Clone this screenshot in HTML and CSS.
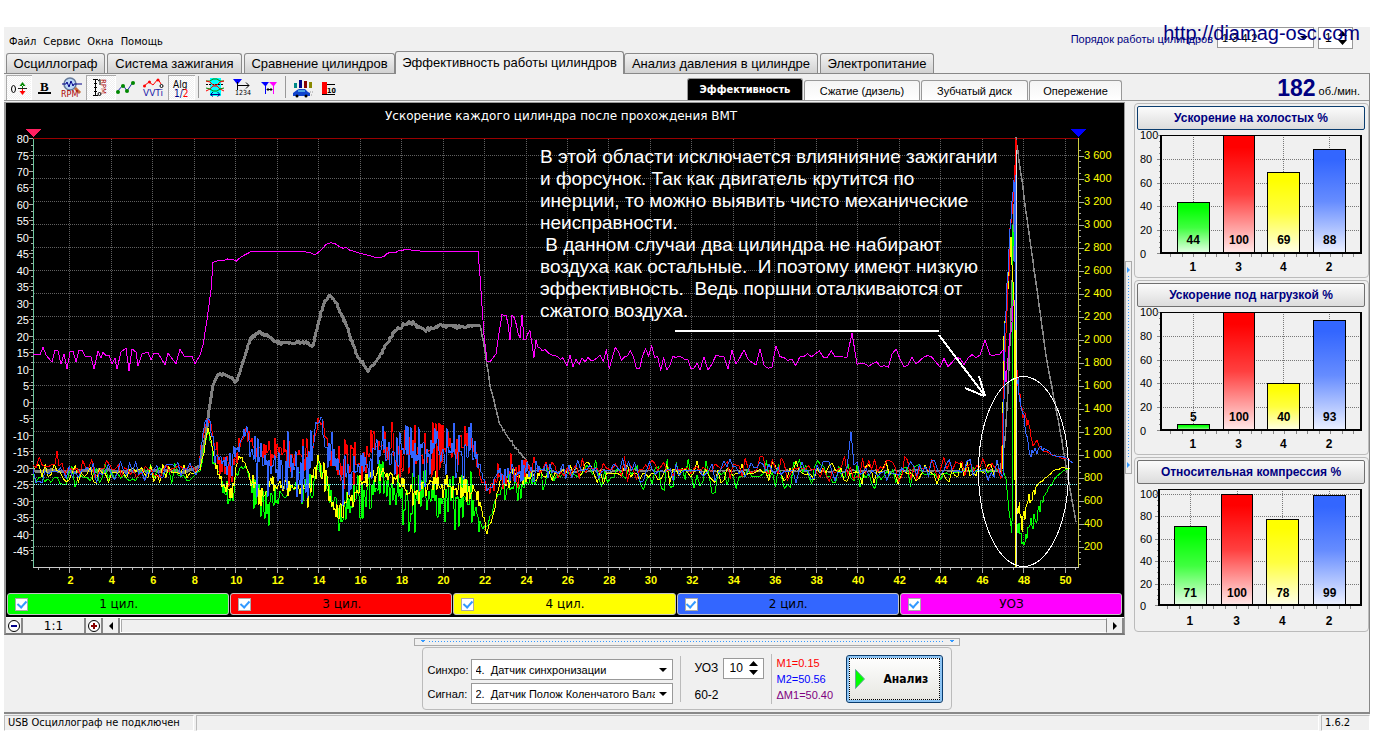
FILE: index.html
```html
<!DOCTYPE html>
<html lang="ru">
<head>
<meta charset="utf-8">
<title>Осциллограф</title>
<link rel="stylesheet" href="styles.css">
</head>
<body>
<div class="app">
  <header class="menubar">
    <nav class="menu">
      <button type="button">Файл</button><button type="button">Сервис</button><button type="button">Окна</button><button type="button">Помощь</button>
    </nav>
    <div class="order">
      <label for="order">Порядок работы цилиндров</label>
      <span class="combo order-combo"><select id="order"><option>1-3-4-2</option></select></span>
      <span class="spin order-spin"><input type="text" value="1" aria-label="Первый цилиндр"><svg viewBox="0 0 9 14"><path d="M4.500 0L9 5H0zM0 9h9L4.500 14z"/></svg></span>
    </div>
    <a class="site" href="#">http://diamag-osc.com</a>
  </header>

  <nav class="tabs">
    <button type="button" class="t1">Осциллограф</button>
    <button type="button" class="t2">Система зажигания</button>
    <button type="button" class="t3">Сравнение цилиндров</button>
    <button type="button" class="t4 active">Эффективность работы цилиндров</button>
    <button type="button" class="t5">Анализ давления в цилиндре</button>
    <button type="button" class="t6">Электропитание</button>
  </nav>

  <main class="frame">
    <div class="toolbar">
      <div class="tools">
        <button type="button" class="pressed" aria-label="Ноль"><svg viewBox="6 75 26 25"><ellipse cx="13.500" cy="89" rx="2" ry="3.500" fill="none" stroke="#000"/><path d="M18 88.500h9" stroke="#222"/><path d="M22.500 82l-3 4h6zM22 85h1v3h-1z" fill="#080"/><path d="M22.500 95l-3-4h6zM22 89h1v3h-1z" fill="red"/></svg></button>
        <button type="button" aria-label="Жирные линии"><svg viewBox="32 75 26 25"><text x="40" y="91" class="ic-b">B</text><path d="M38 93h13" stroke="#000" stroke-width="2"/></svg></button>
        <button type="button" aria-label="Обороты"><svg viewBox="58 75 28 25"><circle cx="70" cy="84" r="6" fill="#bcd8f8" stroke="#667a99" stroke-width="1.500"/><path d="M75 88l5 5" stroke="#c86c3c" stroke-width="3"/><path d="M62 84h4l1-2 2 5 2-6 2 5 1-2h8" fill="none" stroke="#008"/><text x="61" y="97" class="ic-r">RPM</text></svg></button>
        <button type="button" class="pressed" aria-label="Шкала оборотов"><svg viewBox="86 75 30 25"><path d="M93 79.500h5M95.500 79v17M93 95.500h5M94 83.500h3M94 87.500h3M94 91.500h3" stroke="#000"/><path d="M98 81l2-1.500V85" fill="none" stroke="#000"/><circle cx="99.500" cy="94" r="1.500" fill="none" stroke="#000"/><text transform="translate(101 79) rotate(90)" class="ic-s">RPM</text></svg></button>
        <button type="button" aria-label="Точки"><svg viewBox="116 75 26 25"><path d="M117 92l6-7 4 6 6-9" fill="none" stroke="#22a"/><g fill="#080"><circle cx="118" cy="92" r="2"/><circle cx="123" cy="86" r="2"/><circle cx="127" cy="91" r="2"/><circle cx="133" cy="83" r="2"/></g></svg></button>
        <button type="button" aria-label="VVTi"><svg viewBox="142 75 26 25"><path d="M144 86l5-4 4 3 5-6 3 5" fill="none" stroke="red"/><g fill="red"><circle cx="144.500" cy="86" r="1.500"/><circle cx="149.500" cy="82" r="1.500"/><circle cx="158" cy="80" r="1.500"/></g><circle cx="161.500" cy="86" r="1.500" fill="#fff" stroke="#000"/><text x="143" y="96" class="ic-v">VVTi</text></svg></button>
        <button type="button" class="pressed" aria-label="Алгоритм"><svg viewBox="168 75 27 25"><text x="173" y="88" class="ic-a">Alg</text><text x="174" y="97" class="ic-a"><tspan fill="#008">1/</tspan><tspan fill="red">2</tspan></text></svg></button>
        <i class="sep"></i>
        <button type="button" aria-label="Окно фазы"><svg viewBox="202 75 27 25"><path d="M210 78h11v18h-11z" fill="#0ff"/><path d="M206 81h4l3-2h4l3 2h4" fill="none" stroke="#080"/><path d="M206 84.500h18" stroke="#000" stroke-dasharray="2 1"/><path d="M206 81l4 1 3 3h4l3-3 4-1" fill="none" stroke="red"/><path d="M206 91l4-2 3-3h4l3 3 4 2" fill="none" stroke="red"/><path d="M206 88l4 1 3 2h4l3-2 4-1" fill="none" stroke="#080"/><path d="M211 94.500h9M213 92l-2.500 2.500 2.500 2M217.500 92l2.500 2.500-2.500 2" fill="none" stroke="#008"/></svg></button>
        <button type="button" aria-label="Метка 1234"><svg viewBox="229 75 27 25"><path d="M233 79h9l-4 5v3h-1v-3z" fill="#00f"/><path d="M238 85.500h11M246 82.500l3 3-3 3M237.500 82v8" fill="none" stroke="#000"/><text x="235" y="95" class="ic-n">1234</text></svg></button>
        <button type="button" aria-label="Между метками"><svg viewBox="256 75 26 25"><path d="M261 82h8l-3 4v8h-1v-8z" fill="#00f"/><path d="M269 82h8l-3 4v8h-1v-8z" fill="#f0f"/><path d="M267 89.500h5M268.500 88l-1.500 1.500 1.500 1.500M270.500 88l1.500 1.500-1.500 1.500" fill="none" stroke="#000"/></svg></button>
        <i class="sep"></i>
        <button type="button" aria-label="Отчёт"><svg viewBox="290 75 26 25"><path d="M295 83h3v5h-3z" fill="#088"/><path d="M300 80h3v8h-3z" fill="#008"/><path d="M305 81h3v7h-3z" fill="#800"/><path d="M310 82h3v6h-3z" fill="#880"/><path d="M294 93l4-3 2-1h6l3 3 2 1v3h-17z" fill="#14c"/><path d="M299 91h7" stroke="#8ff"/><circle cx="298" cy="96" r="1.500"/><circle cx="307" cy="96" r="1.500"/><path d="M311 92h3M312 95h2" stroke="#999" stroke-dasharray="1 1"/></svg></button>
        <button type="button" aria-label="Порог"><svg viewBox="317 75 26 25"><path d="M324 82h5v12h-5z" fill="red"/><path d="M329 84.500h8M324 94.500h13" stroke="#000"/><text x="329" y="93" class="ic-ten">10</text></svg></button>
      </div>
      <div class="subtabs">
        <button type="button" class="s1 active">Эффективность</button>
        <button type="button" class="s2">Сжатие (дизель)</button>
        <button type="button" class="s3">Зубчатый диск</button>
        <button type="button" class="s4">Опережение</button>
      </div>
      <div class="rpm"><b>182</b> об./мин.</div>
    </div>

    <div class="work">
      <section class="scope">
        <svg id="plot" class="plot" viewBox="6 103 1118 489" role="img" aria-label="Ускорение каждого цилиндра"></svg>
        <div class="legend">
          <label class="c1"><input type="checkbox" checked><span>1 цил.</span></label>
          <label class="c2"><input type="checkbox" checked><span>3 цил.</span></label>
          <label class="c3"><input type="checkbox" checked><span>4 цил.</span></label>
          <label class="c4"><input type="checkbox" checked><span>2 цил.</span></label>
          <label class="c5"><input type="checkbox" checked><span>УОЗ</span></label>
        </div>
        <div class="scroll">
          <button type="button" aria-label="Уменьшить"><svg viewBox="0 0 14 14"><circle cx="7" cy="7" r="5.500" fill="#fff" stroke="#000"/><path d="M4 7h6" stroke="#008" stroke-width="2"/></svg></button>
          <output class="scale">1:1</output>
          <button type="button" aria-label="Увеличить"><svg viewBox="0 0 14 14"><circle cx="7" cy="7" r="5.500" fill="#fff" stroke="#000"/><path d="M4 7h6M7 4v6" stroke="#800" stroke-width="2"/></svg></button>
          <button type="button" class="arrow" aria-label="Влево"><svg viewBox="0 0 14 14"><path d="M9 3v8L5 7z"/></svg></button>
          <div class="track"></div>
          <button type="button" class="arrow" aria-label="Вправо"><svg viewBox="0 0 14 14"><path d="M5 3v8l4-4z"/></svg></button>
        </div>
      </section>
      <div class="vsplit"><div class="vgrip"><i></i><i></i></div></div>
      <aside class="cards">
        <section class="card first"><button type="button">Ускорение на холостых %</button><svg class="bars" id="bars1" viewBox="1137 130 229 143"></svg></section>
        <section class="card"><button type="button">Ускорение под нагрузкой %</button><svg class="bars" id="bars2" viewBox="1137 130 229 143"></svg></section>
        <section class="card"><button type="button">Относительная компрессия %</button><svg class="bars" id="bars3" viewBox="1137 130 229 143"></svg></section>
      </aside>
    </div>

    <div class="bottom">
      <div class="hgrip"></div>
      <div class="panel">
        <div class="sources">
          <label for="sync">Синхро:</label><span class="combo"><select id="sync"><option>4.&nbsp; Датчик синхронизации</option></select></span>
          <label for="signal">Сигнал:</label><span class="combo"><select id="signal"><option>2.&nbsp; Датчик Полож Коленчатого Вала</option></select></span>
        </div>
        <div class="angle">
          <label for="uoz">УОЗ</label>
          <span class="spin"><input id="uoz" type="text" value="10"><svg viewBox="0 0 9 14"><path d="M4.500 0L9 5H0zM0 9h9L4.500 14z"/></svg></span>
          <span>60-2</span>
        </div>
        <div class="marks"><span class="m1">M1=0.15</span><span class="m2">M2=50.56</span><span class="m3">ΔM1=50.40</span></div>
        <button type="button" class="analyze"><svg viewBox="0 0 10 20"><path d="M0.500 0.500L9.500 10 0.500 19.500z" fill="#0f0" stroke="#6a9"/></svg><span>Анализ</span></button>
      </div>
    </div>
  </main>

  <footer class="status"><span class="st1">USB Осциллограф не подключен</span><span class="st2"></span><span class="st3">1.6.2</span></footer>
</div>
<script src="chart.js"></script>
</body>
</html>
```
FILE: styles.css
```css
* { box-sizing: border-box; }
body {
  margin: 0;
  padding: 27px 4px 5px;
  background: #fff;
  color: #000;
  font: 11px/14px "Liberation Sans", Arial, sans-serif;
}
button, select, input { font: inherit; color: inherit; margin: 0; }
svg { display: block; }

.app { background: #f0f0f0; }

.menubar {
  position: relative;
  display: flex;
  justify-content: space-between;
  height: 24px;
}
.menu { display: flex; gap: 7px; padding: 5px 5px 0; font-family: "DejaVu Sans Condensed", "DejaVu Sans", sans-serif; }
.menu button { border: 0; padding: 0; background: none; font-size: 11px; }
.order { display: flex; gap: 4px; align-items: flex-start; padding-right: 17px; color: #000080; }
.order label { padding-top: 5px; font-size: 11px; }
.order .combo, .order .spin { color: #000; height: 22px; }
.order .order-combo { width: 97px; }
.order .order-spin { width: 35px; }
.order .order-spin input { width: 12px; }
.site {
  position: absolute;
  right: 10px;
  top: -6px;
  font-size: 20px;
  line-height: 24px;
  color: #000080;
  text-decoration: none;
}

.combo { position: relative; display: block; }
.combo select {
  width: 100%;
  height: 21px;
  padding: 0 17px 0 4px;
  border: 1px solid #999;
  border-radius: 0;
  background: #fff;
  appearance: none;
  font-size: 11px;
}
.combo::after {
  content: "";
  position: absolute;
  right: 6px;
  top: 9px;
  border: 4px solid transparent;
  border-top-color: #000;
  border-bottom: 0;
}
.spin {
  display: flex;
  align-items: center;
  justify-content: space-between;
  width: 41px;
  height: 21px;
  padding: 0 5px 0 6px;
  border: 1px solid #999;
  background: #fff;
}
.spin input { width: 18px; padding: 0; border: 0; outline: 0; background: none; font-size: 12px; }
.spin svg { width: 9px; height: 14px; }

.tabs { display: flex; align-items: flex-end; gap: 2px; height: 22px; padding-left: 2px; }
.tabs button {
  height: 20px;
  padding: 0;
  border: 1px solid #8a8a8a;
  border-bottom: 0;
  border-radius: 3px 3px 0 0;
  background: linear-gradient(#f2f2f2, #d2d2d2);
  font-size: 13px;
  line-height: 18px;
  white-space: nowrap;
}
.tabs .active { position: relative; height: 23px; margin: 0 -2px -1px; background: #f0f0f0; }
.t1 { width: 99px; }
.t2 { width: 135px; }
.t3 { width: 151px; }
.t4 { width: 229px; }
.t5 { width: 194px; }
.t6 { width: 114px; }

.frame { border: 1px solid #888; border-left: 0; border-bottom-width: 2px; border-bottom-style: double; }

.toolbar { display: flex; justify-content: space-between; height: 27px; border-bottom: 1px solid #999; }
.tools { display: flex; padding: 1px 0 0 2px; width: 683px; }
.tools button { height: 25px; padding: 0; border: 0; background: none; }
.tools .pressed {
  background: repeating-conic-gradient(#fff 0 25%, #f0f0f0 0 50%) 0 0 / 2px 2px;
  box-shadow: inset 1px 1px #aaa, inset -1px -1px #fff;
}
.tools svg { height: 25px; }
.sep { width: 1px; height: 22px; margin: 1px 3px; background: #999; }
.ic-b { font: bold 13px "Liberation Serif", serif; }
.ic-r { font: 8px "DejaVu Sans", sans-serif; fill: #a00; }
.ic-s { font: 7px "DejaVu Sans", sans-serif; fill: #a00; }
.ic-v { font: 9px "DejaVu Sans", sans-serif; fill: #22a; }
.ic-a { font: 10px "DejaVu Sans Condensed", sans-serif; }
.ic-n { font: 7px "DejaVu Sans Condensed", sans-serif; }
.ic-ten { font: bold 7px "DejaVu Sans Condensed", sans-serif; }

.subtabs { display: flex; align-items: flex-end; gap: 1px; flex: 1; }
.subtabs button {
  height: 20px;
  padding: 0;
  border: 1px solid #999;
  border-bottom: 0;
  border-radius: 3px 3px 0 0;
  background: linear-gradient(#f4f4f4, #fff);
  font-size: 11px;
  white-space: nowrap;
}
.subtabs .active { height: 22px; background: #000; color: #fff; font: bold 11px "DejaVu Sans Condensed", sans-serif; }
.s1 { width: 116px; }
.s2 { width: 116px; }
.s3 { width: 107px; }
.s4 { width: 93px; }
.rpm { padding: 2px 9px 0 0; font-size: 11px; line-height: 24px; white-space: nowrap; }
.rpm b { font-size: 23px; color: #000080; vertical-align: -1px; }

.work { display: flex; padding-top: 1px; }
.scope { flex: 1; min-width: 0; border: 2px solid #999; border-width: 1px 1px 2px 2px; border-bottom-color: #777; }
.plot { width: 100%; background: #000; shape-rendering: crispEdges; }
.plot text { font: 11px "Liberation Sans", Arial, sans-serif; }
.plot .title { font: 12px "DejaVu Sans", sans-serif; fill: #fff; }
.plot .yl { fill: #fff; text-anchor: end; }
.plot .yr { fill: #ff0; }
.plot .xl { fill: #ff0; font-weight: bold; text-anchor: middle; }
.plot .note { fill: #fff; font-size: 19px; white-space: pre; }

.legend { display: flex; gap: 1px; padding: 1px 2px 2px 1px; background: #000; }
.legend label {
  flex: 1;
  display: flex;
  align-items: center;
  height: 22px;
  padding: 0 7px;
  border: 1px solid #c4c4c4;
  border-radius: 3px;
  font: 12px/20px "DejaVu Sans", sans-serif;
}
.legend span { flex: 1; text-align: center; padding-right: 12px; }
.legend input {
  appearance: none;
  width: 13px;
  height: 13px;
  border: 1px solid #aaa;
  background: #fff;
  display: grid;
  place-items: center;
}
.legend input:checked::after {
  content: "";
  width: 4px;
  height: 7px;
  margin-bottom: 2px;
  border: solid #39f;
  border-width: 0 2px 2px 0;
  transform: rotate(42deg);
}
.c1 { background: #0f0; }
.c2 { background: #f00; }
.c3 { background: #ff0; }
.c4 { background: #36f; }
.c5 { background: #f0f; }

.scroll { display: flex; height: 16px; border-top: 1px solid #fff; }
.scroll button { width: 17px; padding: 0; border: 0; border-right: 2px solid #888; background: #f0f0f0; }
.scroll svg { width: 14px; height: 14px; margin: auto; }
.scale { width: 63px; border-right: 2px solid #888; text-align: center; font: 12px/16px "DejaVu Sans", sans-serif; overflow: hidden; }
.track { flex: 1; border: 1px solid #fff; border-right-color: #888; box-shadow: inset 1px 1px #aaa; }

.vsplit { width: 7px; padding-top: 159px; }
.vgrip {
  display: flex;
  flex-direction: column;
  justify-content: space-between;
  height: 213px;
  padding: 5px 1px;
  border: 1px solid #aaa;
  background: repeating-linear-gradient(#39f 0 1px, transparent 1px 3px) center 14px / 1px 183px no-repeat;
}
.vgrip i { width: 0; border: 3px solid transparent; border-left-color: #39f; border-right: 0; }

.cards { display: flex; flex-direction: column; gap: 2px; width: 237px; padding: 1px 0 0 2px; }
.card { height: 175px; border: 1px solid #bbb; border-radius: 4px; padding: 2px 3px 0 2px; }
.card button {
  display: block;
  width: 100%;
  height: 24px;
  border: 1px solid #707070;
  border-radius: 2px;
  background: linear-gradient(#fbfbfb, #dcdcdc);
  color: #000080;
  font-size: 12px;
  font-weight: bold;
  line-height: 14px;
  padding: 0;
}
.first button { border-color: #0a3c6e; }
.bars { width: 100%; overflow: visible; shape-rendering: crispEdges; }
.bars text { font: 11px "Liberation Sans", Arial, sans-serif; text-anchor: middle; }
.bars .val, .bars .cat { font-weight: bold; font-size: 12px; }
.bars .tick { text-anchor: start; }

.bottom { display: flex; flex-direction: column; align-items: center; gap: 1px; padding: 3px 0 2px; }
.hgrip {
  display: flex;
  width: 546px;
  height: 8px;
  border: 1px solid #aaa;
  background:
    conic-gradient(from -45deg at 50% 100%, #39f 90deg, transparent 0) 5px 1px / 6px 3px no-repeat,
    conic-gradient(from -45deg at 50% 100%, #39f 90deg, transparent 0) calc(100% - 4px) 1px / 6px 3px no-repeat,
    repeating-linear-gradient(90deg, #39f 0 1px, transparent 1px 3px) center 2px / calc(100% - 28px) 1px no-repeat;
}
.panel { display: flex; align-items: center; height: 63px; width: 530px; border: 1px solid #bbb; border-radius: 4px; padding-left: 5px; }
.sources { display: grid; grid-template-columns: 43px 202px; row-gap: 3px; align-items: center; margin-top: 6px; padding-right: 7px; }
.sources .combo { width: 202px; }
.angle { display: grid; grid-template-columns: 28px 41px; align-content: space-between; align-items: center; height: 46px; border-left: 1px solid #bbb; padding: 2px 7px 0 14px; font-size: 12px; }
.marks { display: flex; flex-direction: column; gap: 2px; height: 50px; width: 75px; border-left: 1px solid #bbb; padding: 2px 0 0 5px; }
.m1 { color: red; }
.m2 { color: blue; }
.m3 { color: purple; }
.analyze {
  display: flex;
  align-items: center;
  gap: 19px;
  width: 97px;
  height: 48px;
  padding: 0 8px;
  border: 1px solid #0a3c6e;
  border-radius: 3px;
  outline: 1px dotted #000;
  outline-offset: -4px;
  background: linear-gradient(#fff, #e6e6e0);
  box-shadow: inset 0 0 0 2px #8cc4f4;
  font: bold 12px "DejaVu Sans Condensed", sans-serif;
}
.analyze svg { width: 10px; height: 20px; }

.status { display: flex; gap: 2px; height: 17px; padding-top: 1px; font: 11px/16px "DejaVu Sans Condensed", "DejaVu Sans", sans-serif; }
.status span { border: 1px solid #bbb; border-right-color: #fff; border-bottom-color: #fff; padding-left: 3px; line-height: 14px; }
.st1 { width: 190px; }
.st2 { flex: 1; }
.st3 { width: 49px; }
```
FILE: chart.js
```js
const NS = 'http://www.w3.org/2000/svg';

function add(parent, name, attrs, text) {
  const el = document.createElementNS(NS, name);
  for (const key in attrs) el.setAttribute(key, attrs[key]);
  if (text !== undefined) el.textContent = text;
  parent.appendChild(el);
  return el;
}

// Deterministic noise so that the traces are the same on each load.
function noise(seed) {
  let s = seed;
  return () => {
    s = (s * 1664525 + 1013904223) >>> 0;
    return s / 4294967296;
  };
}

// Key points are [x, centre, swing, step].
function trace(keys, seed) {
  const rnd = noise(seed);
  let d = '';
  for (let i = 0; i < keys.length - 1; i++) {
    const [x0, y0, a0 = 0, step = 3] = keys[i];
    const [x1, y1, a1 = 0] = keys[i + 1];
    const n = Math.max(1, Math.round((x1 - x0) / step));
    for (let k = 0; k < n; k++) {
      const t = k / n;
      const r = rnd() * 2 - 1;
      const swing = a0 + (a1 - a0) * t;
      d += (d ? 'L' : 'M') + (x0 + (x1 - x0) * t).toFixed(1) + ' ' +
        (y0 + (y1 - y0) * t + r * Math.abs(r) * swing).toFixed(1);
    }
  }
  const last = keys[keys.length - 1];
  return d + 'L' + last[0] + ' ' + last[1];
}

function drawPlot() {
  const svg = document.getElementById('plot');
  add(svg, 'text', { x: 385, y: 120, class: 'title' }, 'Ускорение каждого цилиндра после прохождения ВМТ');

  let grid = '';
  for (let v = 2; v <= 50; v += 2) grid += `M${Math.round(29 + 20.73 * v) - 0.5} 139V567`;
  for (let k = 0; k < 18; k++) grid += `M34 ${155.5 + 23 * k}H1078`;
  add(svg, 'path', { d: grid, stroke: '#606060', 'stroke-dasharray': '1 1', fill: 'none' });

  let ticks = '';
  for (let v = -49; v <= 80; v++) {
    const y = Math.round(401.7 - 3.296 * v) + 0.5;
    if (v % 5 === 0) {
      ticks += `M29 ${y}h4`;
      if (v >= -45) add(svg, 'text', { x: 29, y: y + 4, class: 'yl' }, v);
    } else if (v % 2 === 0) ticks += `M31 ${y}h2`;
  }
  for (let k = -1; k < 74; k++) {
    const y = 155.5 + 5.75 * k;
    if (y < 568) ticks += `M1079 ${y.toFixed(0)}.5h${k % 4 === 0 ? 5 : 2}`;
  }
  for (let k = 0; k < 18; k++) {
    const v = String(3600 - 200 * k);
    add(svg, 'text', { x: 1084, y: 159 + 23 * k, class: 'yr' }, v.length > 3 ? v[0] + ' ' + v.slice(1) : v);
  }
  for (let k = 1; k <= 101; k++) {
    const x = Math.round(29 + 10.365 * k) - 0.5;
    if (x > 34) ticks += `M${x} 568v${k % 4 === 0 ? 5 : 2}`;
  }
  for (let v = 2; v <= 50; v += 2) add(svg, 'text', { x: 29 + 20.73 * v, y: 584, class: 'xl' }, v);
  add(svg, 'path', { d: ticks, stroke: '#aaa', fill: 'none' });
  add(svg, 'path', { d: 'M33 138.5H1078', stroke: '#900' });
  add(svg, 'path', { d: 'M33 567.5H1079', stroke: '#ccc' });
  add(svg, 'path', { d: 'M33.500 139V567', stroke: '#6ec8a0' });
  add(svg, 'path', { d: 'M1078.500 138V567', stroke: '#cccc40' });
  add(svg, 'path', { d: 'M25 129h16l-8 8z', fill: '#ff2060' });
  add(svg, 'path', { d: 'M1070 129h16l-8 8z', fill: '#00f' });

  const line = (d, stroke, width = 1) =>
    add(svg, 'path', { d, stroke, 'stroke-width': width, fill: 'none', 'stroke-linejoin': 'round' });

  line(trace([[33, 471, 2], [190, 471, 2], [200, 466], [206, 435], [209, 410], [213, 385], [217, 376, 2, 1], [222, 374, 2, 1],
    [230, 376, 2, 1], [236, 382, 2, 1], [243, 362, 2, 1], [250, 340, 2, 1], [257, 332, 2, 1], [265, 334, 2, 1], [275, 341, 2, 1],
    [290, 344, 2, 1], [305, 342, 2, 1], [313, 347, 2, 1], [319, 320, 2, 1], [325, 300, 2, 1], [330, 296, 2, 1], [335, 301, 2, 1],
    [345, 322, 2, 1], [357, 355, 2, 1], [368, 371, 2, 1], [380, 355, 2, 1], [395, 330, 2, 1], [410, 322, 2, 1], [425, 330, 2, 1],
    [440, 325, 2, 1], [460, 327, 2, 1], [480, 325]], 4), '#808080', 3);
  line(trace([[480, 325, 1, 1], [484, 345, 1, 1], [490, 385, 2, 1], [499, 422, 2, 1], [505, 433, 2, 1], [515, 447, 2, 1],
    [526, 460, 1, 1], [532, 471, 2], [1000, 471, 1], [1005, 440], [1008, 390], [1012, 290], [1016, 138, 0, 40], [1017, 146, 2, 1],
    [1030, 240, 2, 1], [1047, 362, 2, 1], [1060, 430, 2, 1], [1068, 478, 3, 1], [1076, 522]], 9), '#888', 1.5);

  line(trace([[33, 476, 12], [66, 485, 12], [69, 478, 15], [190, 476, 15, 3], [200, 471, 4, 2], [208, 431, 4, 1], [214, 462, 8, 1],
    [226, 490, 12, 1], [233, 500, 10, 1], [236, 478, 8, 2], [245, 466, 5, 2], [251, 488, 16, 1], [262, 502, 22, 1], [272, 505, 26, 1],
    [278, 495, 12, 2], [300, 490, 20, 1], [312, 488, 14, 1], [319, 463, 8, 1], [325, 480, 10, 1], [334, 510, 14, 1],
    [345, 512, 28, 1], [356, 500, 25, 1], [368, 485, 30, 1], [380, 475, 20, 1], [393, 490, 22, 1], [410, 505, 35, 1],
    [417, 495, 38, 1], [430, 498, 22, 1], [450, 498, 34, 1], [472, 500, 30, 1], [484, 532, 6, 2], [490, 516, 4, 2], [500, 490, 15, 1],
    [535, 480, 18, 2], [545, 474, 16, 3], [700, 476, 18, 3], [860, 476, 17, 3], [1003, 471, 3], [1006, 480, 2], [1009, 512, 2],
    [1012, 533, 0, 20], [1012.5, 225, 0, 20], [1015, 260, 0, 20], [1016, 566, 0, 20], [1017, 525, 12, 1], [1024, 545, 12, 1],
    [1028, 530, 8, 1], [1037, 516, 7, 1], [1045, 493, 3, 2], [1057, 476, 1], [1066, 469, 1], [1070, 468]], 17), '#0f0');

  line(trace([[33, 473, 10], [190, 473, 12], [200, 470, 5, 2], [208, 428, 3, 1], [216, 465, 6, 1], [225, 488, 10, 1], [233, 490, 12, 1],
    [237, 460, 4, 1], [243, 457, 5, 2], [251, 480, 12, 1], [265, 495, 22, 1], [275, 487, 10, 1], [290, 487, 10, 1], [312, 492, 18, 1],
    [318, 458, 12, 1], [325, 478, 14, 1], [334, 510, 12, 1], [346, 503, 14, 1], [362, 482, 14, 1], [372, 475, 10, 1], [390, 473, 12, 1],
    [413, 498, 16, 1], [430, 482, 12, 1], [460, 490, 14, 1], [476, 487, 16, 1], [487, 530, 5, 2], [495, 510, 4, 2], [500, 480, 14, 1],
    [540, 473, 10, 3], [700, 473, 13], [1000, 473, 12], [1002, 470], [1004, 340, 14, 1], [1008, 290, 14, 1], [1011, 248, 12, 1],
    [1014, 300, 0, 20], [1015.5, 566, 0, 20], [1016.5, 510, 12, 1], [1023, 520, 14, 1], [1028, 500, 7, 1], [1036, 490, 5, 1],
    [1044, 479, 2], [1054, 471, 1], [1062, 468, 1], [1070, 468]], 31), '#ff0');

  line(trace([[33, 468, 10], [55, 463, 8], [57, 451], [59, 468, 9], [190, 470, 9], [199, 464, 6, 2], [205, 425, 6, 1], [210, 420, 5, 1],
    [215, 448, 10, 1], [222, 462, 26, 1], [233, 466, 22, 1], [239, 445, 8, 1], [246, 432, 8, 1], [254, 448, 12, 1], [270, 455, 18, 1],
    [312, 455, 18, 1], [318, 420, 8, 1], [323, 425, 8, 1], [328, 448, 12, 1], [342, 465, 28, 1], [362, 465, 32, 1],
    [375, 445, 20, 1], [400, 450, 30, 1], [420, 458, 34, 1], [430, 450, 34, 1], [450, 448, 24, 1], [475, 447, 20, 1], [481, 480, 6, 1],
    [488, 490, 5, 1], [500, 475, 22, 1], [530, 470, 18, 2], [540, 469, 11], [700, 469, 14], [1001, 469, 12], [1004, 380, 14, 1],
    [1010, 240, 14, 1], [1014, 190, 6, 1], [1016, 140, 0, 40], [1017, 375, 12, 1], [1022, 410, 10, 1], [1029, 422, 6, 1],
    [1033, 446, 2], [1037, 440, 2], [1042, 450, 4, 2], [1055, 456, 1], [1070, 460]], 47), '#f00');

  line(trace([[33, 472, 11], [190, 471, 11], [199, 466, 6, 2], [205, 423, 4, 1], [210, 422, 5, 1], [215, 455, 10, 1], [225, 467, 14, 1],
    [233, 465, 16, 1], [239, 442, 12, 1], [247, 428, 4, 1], [252, 460, 40, 1], [265, 465, 32, 1], [290, 468, 38, 1], [312, 466, 36, 1],
    [316, 420, 10, 1], [322, 425, 22, 1], [328, 452, 24, 1], [342, 475, 38, 1], [362, 472, 36, 1], [375, 450, 24, 1], [400, 452, 28, 1],
    [420, 462, 40, 1], [440, 450, 30, 1], [470, 458, 40, 1], [481, 472, 8, 1], [487, 492, 3, 2], [498, 475, 8, 1], [540, 471, 16, 2],
    [560, 471, 10], [700, 470, 15], [847, 472, 12], [851, 432, 0, 4], [854, 473, 12], [1003, 470, 12], [1005, 320, 14, 1],
    [1010, 230, 10, 1], [1014, 180, 0, 20], [1016.5, 380, 14, 1], [1022, 408, 8, 1], [1026, 430, 5, 1], [1030, 455, 7, 1],
    [1035, 451, 5, 1], [1044, 448, 3, 2], [1055, 456, 1], [1066, 458, 1], [1073, 463]], 63), '#36f');

  line(trace([[33, 354], [40, 355], [43, 347], [46, 355], [52, 362], [55, 350], [58, 351], [61, 364], [64, 354], [67, 369], [70, 352],
    [73, 351], [76, 362], [79, 350], [82, 350], [85, 356], [91, 357], [94, 369], [98, 351], [101, 358], [103, 352], [106, 356],
    [109, 355], [112, 364], [115, 358], [117, 369], [121, 352], [126, 348], [129, 371], [132, 349], [136, 352], [138, 366],
    [142, 354], [148, 352], [151, 360], [154, 353], [158, 353], [165, 365], [168, 353], [176, 364], [180, 349], [184, 356],
    [192, 356], [195, 364], [200, 355], [203, 345], [207, 320], [211, 290], [213, 263, 2], [239, 259, 2], [252, 251], [310, 252, 1],
    [315, 255], [320, 251, 1], [325, 245, 1], [333, 243, 2], [343, 248, 2], [356, 252, 2], [378, 258, 2], [390, 252, 1],
    [410, 250, 2], [420, 251], [478, 251], [480, 276, 0, 20], [484, 335, 0, 20], [487, 361], [490, 362], [496, 354], [499, 333],
    [502, 311, 4, 2], [512, 332, 30, 2], [530, 344, 24, 2], [542, 349, 2], [552, 355], [563, 358, 4], [567, 366],
    [570, 358, 12, 3], [700, 357, 14, 4], [780, 357, 14, 4], [847, 357, 4], [852, 333, 0, 10], [857, 364, 10, 4], [900, 357, 11, 4],
    [980, 358, 8, 4], [985, 340, 0, 10], [990, 356, 4], [1000, 354], [1003, 350], [1006, 382, 0, 10], [1010, 335, 10, 1], [1014, 300]], 88), '#f0f', 1);

  add(svg, 'path', { d: 'M34 484.5H1078', stroke: '#8ff', 'stroke-dasharray': '1 1' });
  add(svg, 'path', { d: 'M1015.500 138V175', stroke: '#f00' });
  add(svg, 'path', { d: 'M1015.500 175V330', stroke: '#36f' });
  add(svg, 'path', { d: 'M1015.500 330V567', stroke: '#ff0' });
  add(svg, 'path', { d: 'M1016.500 150V567', stroke: '#ddd' });
  add(svg, 'ellipse', { cx: 1023.5, cy: 471.5, rx: 45, ry: 95, fill: 'none', stroke: '#fff' });
  add(svg, 'path', { d: 'M675 331H939M939 335L985 396M965 388L984 396M979 376L985 396', stroke: '#fff', 'stroke-width': 2, fill: 'none' });

  ['В этой области исключается влиянияние зажигании',
    'и форсунок. Так как двигатель крутится по',
    'инерции, то можно выявить чисто механические',
    'неисправности.',
    ' В данном случаи два цилиндра не набирают',
    'воздуха как остальные.  И поэтому имеют низкую',
    'эффективность.  Ведь поршни оталкиваются от',
    'сжатого воздуха.'].forEach((t, i) => add(svg, 'text', { x: 540, y: 163 + 22 * i, class: 'note' }, t));
}

function drawBars(id, values, left, top, peak, bottom, centres, drop) {
  const svg = document.getElementById(id);
  const colours = ['#00ff00', '#ff0000', '#ffff00', '#3366ff'];
  const names = [1, 3, 4, 2];
  const yOf = v => Math.round(bottom - (bottom - peak) * v / 100);
  let grid = '';
  let ticks = '';
  for (let v = 0; v <= 100; v += 5) {
    const y = yOf(v) + 0.5;
    ticks += v % 20 ? `M${left - 2} ${y}h2` : `M${left - 4} ${y}h4`;
    if (v % 20 === 0) {
      if (v) grid += `M${left} ${y}H1361`;
      add(svg, 'text', { x: 1140, y: y + 4, class: 'tick' }, v);
    }
  }
  centres.forEach(x => { grid += `M${x + 0.5} ${top}V${bottom}`; });
  for (let x = centres[0] - 23; x < 1360; x += 11.5) ticks += `M${Math.round(x) + 0.5} ${bottom + 1}v3`;
  add(svg, 'path', { d: grid, stroke: '#777', 'stroke-dasharray': '1 1', fill: 'none' });
  add(svg, 'path', { d: ticks, stroke: '#888' });
  values.forEach((v, i) => {
    const grad = add(svg, 'linearGradient', { id: id + 'g' + i, x1: 0, y1: 0, x2: 0, y2: 1 });
    add(grad, 'stop', { offset: 0.1, 'stop-color': colours[i] });
    add(grad, 'stop', { offset: 0.5, 'stop-color': colours[i], 'stop-opacity': 0.75 });
    add(grad, 'stop', { offset: 1, 'stop-color': colours[i], 'stop-opacity': 0.08 });
    const y = yOf(v) + 0.5;
    add(svg, 'rect', { x: centres[i] - 16 + 0.5, y, width: 32, height: bottom - y, fill: '#fff' });
    add(svg, 'rect', { x: centres[i] - 16 + 0.5, y, width: 32, height: bottom - y, fill: `url(#${id}g${i})`, stroke: '#000' });
    add(svg, 'text', { x: centres[i] + 0.5, y: bottom - 9, class: 'val' }, v);
    add(svg, 'text', { x: centres[i], y: bottom + drop, class: 'cat' }, names[i]);
  });
  add(svg, 'path', { d: `M${left} ${top + 0.5}H1362`, stroke: '#000' });
  add(svg, 'path', { d: `M${left} ${top}V${bottom}M1362 ${top}V${bottom + 1}M${left - 1} ${bottom}H1363`, stroke: '#000', 'stroke-width': 2 });
}

drawPlot();
drawBars('bars1', [44, 100, 69, 88], 1161, 135, 135, 254, [1193, 1239, 1284, 1330], 18);
drawBars('bars2', [5, 100, 40, 93], 1161, 135, 135, 254, [1193, 1239, 1284, 1330], 18);
drawBars('bars3', [71, 100, 78, 99], 1159, 135, 140, 252, [1190, 1237, 1283, 1330], 20);
```
